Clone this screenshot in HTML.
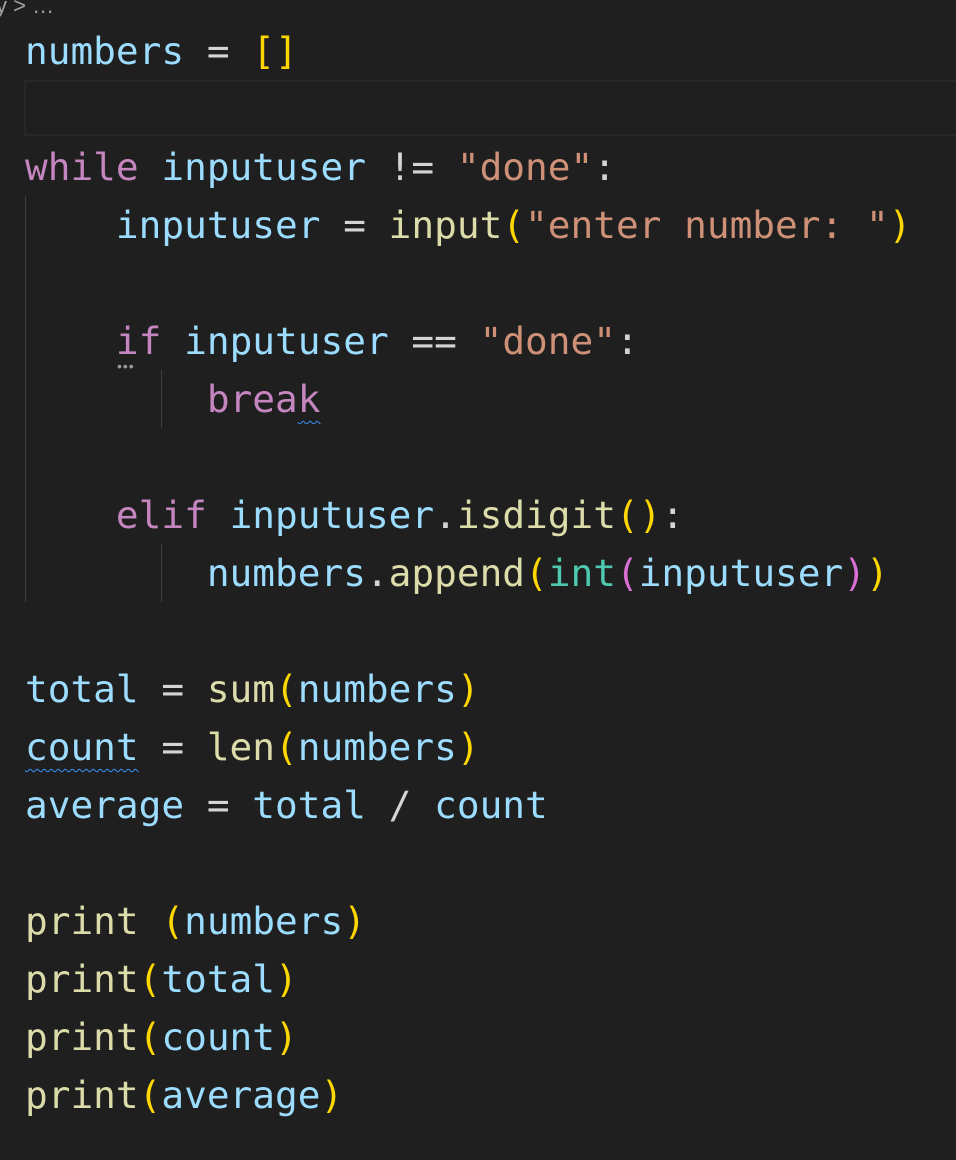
<!DOCTYPE html>
<html><head><style>
html,body{margin:0;padding:0;background:#1f1f1f;width:956px;height:1160px;overflow:hidden}
.bc{position:absolute;left:-4px;top:-7px;font:22px "Liberation Sans",sans-serif;color:#a0a0a0}
.cur{position:absolute;left:24px;top:80px;width:940px;height:56px;border:2px solid #282828;box-sizing:border-box}
pre{position:absolute;left:25px;top:22px;margin:0;font:37.75px/58px "DejaVu Sans Mono",monospace;color:#d4d4d4}
.v{color:#9cdcfe}.k{color:#c586c0}.s{color:#ce9178}.f{color:#dcdcaa}.b{color:#ffd700}.p{color:#da70d6}.t{color:#4ec9b0}
.g{position:absolute;width:1px;background:#404040}
.sq{text-decoration:underline wavy #3794ff;text-decoration-thickness:1px;text-underline-offset:8px}
</style></head><body>
<div class="bc">y &gt; …</div>
<div class="cur"></div>
<div class="g" style="left:25px;top:196px;height:406px"></div>
<div class="g" style="left:161px;top:370px;height:58px"></div>
<div class="g" style="left:161px;top:544px;height:58px"></div>
<div style="position:absolute;left:117px;top:358px;color:#999;font:14px 'Liberation Sans',sans-serif;letter-spacing:1px">•••</div>
<pre><span class="v">numbers</span> = <span class="b">[]</span>

<span class="k">while</span> <span class="v">inputuser</span> != <span class="s">"done"</span>:
    <span class="v">inputuser</span> = <span class="f">input</span><span class="b">(</span><span class="s">"enter number: "</span><span class="b">)</span>

    <span class="k">if</span> <span class="v">inputuser</span> == <span class="s">"done"</span>:
        <span class="k">brea</span><span class="k sq">k</span>

    <span class="k">elif</span> <span class="v">inputuser</span>.<span class="f">isdigit</span><span class="b">()</span>:
        <span class="v">numbers</span>.<span class="f">append</span><span class="b">(</span><span class="t">int</span><span class="p">(</span><span class="v">inputuser</span><span class="p">)</span><span class="b">)</span>

<span class="v">total</span> = <span class="f">sum</span><span class="b">(</span><span class="v">numbers</span><span class="b">)</span>
<span class="v sq">count</span> = <span class="f">len</span><span class="b">(</span><span class="v">numbers</span><span class="b">)</span>
<span class="v">average</span> = <span class="v">total</span> / <span class="v">count</span>

<span class="f">print</span> <span class="b">(</span><span class="v">numbers</span><span class="b">)</span>
<span class="f">print</span><span class="b">(</span><span class="v">total</span><span class="b">)</span>
<span class="f">print</span><span class="b">(</span><span class="v">count</span><span class="b">)</span>
<span class="f">print</span><span class="b">(</span><span class="v">average</span><span class="b">)</span></pre>
</body></html>
